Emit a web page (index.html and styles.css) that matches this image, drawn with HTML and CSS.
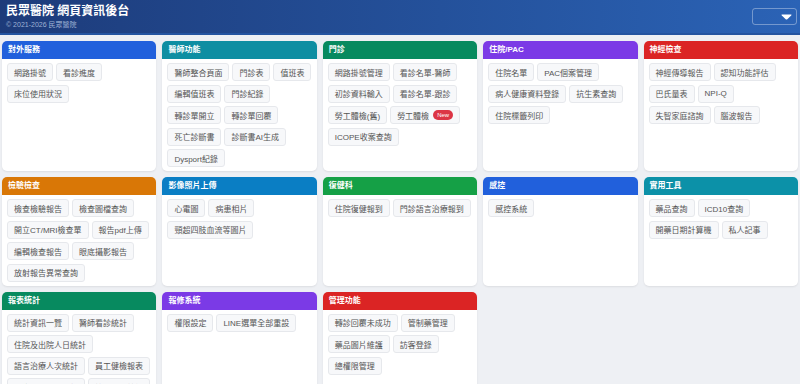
FILE: index.html
```html
<!DOCTYPE html>
<html>
  <head>
    <meta charset="utf-8">
    <title>民眾醫院 網頁資訊後台</title>
    <link rel="stylesheet" href="styles.css">
  </head>
  <body>
    <div class="topbar">
      <div class="brand">
        <h1>民眾醫院 網頁資訊後台</h1>
        <div class="copy">© 2021-2026 民眾醫院</div>
      </div>
      <div class="user-menu">
        <svg width="11" height="6" viewBox="0 0 11 6"><path d="M1 0.5 H10 Q11 0.5 10.2 1.6 L6.3 5.2 Q5.5 5.8 4.7 5.2 L0.8 1.6 Q0 0.5 1 0.5 Z" fill="#fff"/></svg>
      </div>
    </div>

    <div class="grid">
      <div class="card">
        <div class="card-head c-blue">對外服務</div>
        <div class="card-body">
          <a class="btn">網路掛號</a>
          <a class="btn">看診進度</a>
          <a class="btn">床位使用狀況</a>
        </div>
      </div>

      <div class="card">
        <div class="card-head c-teal">醫師功能</div>
        <div class="card-body">
          <a class="btn">醫師整合頁面</a>
          <a class="btn">門診表</a>
          <a class="btn">值班表</a>
          <a class="btn">編輯值班表</a>
          <a class="btn">門診紀錄</a>
          <a class="btn">轉診單開立</a>
          <a class="btn">轉診單回覆</a>
          <a class="btn">死亡診斷書</a>
          <a class="btn">診斷書AI生成</a>
          <a class="btn">Dysport紀錄</a>
        </div>
      </div>

      <div class="card">
        <div class="card-head c-emerald">門診</div>
        <div class="card-body">
          <a class="btn">網路掛號管理</a>
          <a class="btn">看診名單-醫師</a>
          <a class="btn">初診資料輸入</a>
          <a class="btn">看診名單-跟診</a>
          <a class="btn">勞工體檢(舊)</a>
          <a class="btn">勞工體檢 <span class="badge">New</span></a>
          <a class="btn">ICOPE收案查詢</a>
        </div>
      </div>

      <div class="card">
        <div class="card-head c-purple">住院/PAC</div>
        <div class="card-body">
          <a class="btn">住院名單</a>
          <a class="btn">PAC個案管理</a>
          <a class="btn">病人健康資料登錄</a>
          <a class="btn">抗生素查詢</a>
          <a class="btn">住院標籤列印</a>
        </div>
      </div>

      <div class="card">
        <div class="card-head c-red">神經檢查</div>
        <div class="card-body">
          <a class="btn">神經傳導報告</a>
          <a class="btn">認知功能評估</a>
          <a class="btn">巴氏量表</a>
          <a class="btn">NPI-Q</a>
          <a class="btn">失智家庭諮詢</a>
          <a class="btn">腦波報告</a>
        </div>
      </div>

      <div class="card">
        <div class="card-head c-orange">檢驗檢查</div>
        <div class="card-body">
          <a class="btn">檢查檢驗報告</a>
          <a class="btn">檢查圖檔查詢</a>
          <a class="btn">開立CT/MRI檢查單</a>
          <a class="btn">報告pdf上傳</a>
          <a class="btn">編輯檢查報告</a>
          <a class="btn">眼底攝影報告</a>
          <a class="btn">放射報告異常查詢</a>
        </div>
      </div>

      <div class="card">
        <div class="card-head c-sky">影像照片上傳</div>
        <div class="card-body">
          <a class="btn">心電圖</a>
          <a class="btn">病患相片</a>
          <a class="btn">頸超四肢血流等圖片</a>
        </div>
      </div>

      <div class="card">
        <div class="card-head c-green">復健科</div>
        <div class="card-body">
          <a class="btn">住院復健報到</a>
          <a class="btn">門診語言治療報到</a>
        </div>
      </div>

      <div class="card">
        <div class="card-head c-blue">感控</div>
        <div class="card-body">
          <a class="btn">感控系統</a>
        </div>
      </div>

      <div class="card">
        <div class="card-head c-cyan">實用工具</div>
        <div class="card-body">
          <a class="btn">藥品查詢</a>
          <a class="btn">ICD10查詢</a>
          <a class="btn">開藥日期計算機</a>
          <a class="btn">私人記事</a>
        </div>
      </div>

      <div class="card">
        <div class="card-head c-emerald">報表統計</div>
        <div class="card-body">
          <a class="btn">統計資訊一覽</a>
          <a class="btn">醫師看診統計</a>
          <a class="btn">住院及出院人日統計</a>
          <a class="btn">語言治療人次統計</a>
          <a class="btn">員工健檢報表</a>
          <a class="btn">病床異動資料更新</a>
          <a class="btn">簽署追蹤統計</a>
        </div>
      </div>

      <div class="card">
        <div class="card-head c-purple">報修系統</div>
        <div class="card-body">
          <a class="btn">權限設定</a>
          <a class="btn">LINE選單全部重設</a>
        </div>
      </div>

      <div class="card">
        <div class="card-head c-red">管理功能</div>
        <div class="card-body">
          <a class="btn">轉診回覆未成功</a>
          <a class="btn">管制藥管理</a>
          <a class="btn">藥品圖片維護</a>
          <a class="btn">訪客登錄</a>
          <a class="btn">總權限管理</a>
        </div>
      </div>
    </div>
  </body>
</html>
```

FILE: styles.css
```css
body {
  margin: 0;
  font-family: "Liberation Sans", "Noto Sans CJK TC", sans-serif;
  background-color: #eef0f4;
  color: #555;
}
.topbar {
  height: 33px;
  display: flex;
  justify-content: space-between;
  align-items: center;
  padding: 0 3px 0 6px;
  background: linear-gradient(90deg, #1d3b7a 0%, #24519b 55%, #2b63b6 100%);
  border-bottom: 2px solid #2454a0;
}
.brand h1 {
  margin: 0;
  font-size: 12px;
  line-height: 14px;
  color: #fff;
  font-weight: bold;
}
.copy {
  font-size: 7px;
  line-height: 9px;
  margin-top: 2px;
  color: #9fb2d4;
}
.user-menu {
  width: 45px;
  height: 17px;
  box-sizing: border-box;
  border: 1px solid rgba(255, 255, 255, 0.35);
  border-radius: 3px;
  display: flex;
  justify-content: flex-end;
  align-items: center;
  padding-right: 4px;
}
.grid {
  display: grid;
  grid-template-columns: repeat(5, 1fr);
  gap: 6px;
  padding: 6px 2px;
}
.card {
  background-color: #fff;
  border-radius: 5px;
  box-shadow: 0 1px 2px rgba(0, 0, 0, 0.08);
  overflow: hidden;
}
.card-head {
  height: 18px;
  line-height: 18px;
  padding: 0 6px;
  font-size: 8px;
  font-weight: bold;
  color: #fff;
}
.card-body {
  display: flex;
  flex-wrap: wrap;
  align-content: flex-start;
  gap: 3.5px 3px;
  padding: 4px 5px;
}
.btn {
  display: inline-flex;
  align-items: center;
  height: 18px;
  box-sizing: border-box;
  padding: 0 6px;
  font-size: 8px;
  color: #555;
  background-color: #f7f8fa;
  border: 1px solid #e6e8ec;
  border-radius: 3px;
  white-space: nowrap;
}
.badge {
  display: inline-block;
  margin-left: 4px;
  padding: 0 4px;
  height: 10px;
  line-height: 10px;
  font-size: 6px;
  color: #fff;
  background-color: #dc3545;
  border-radius: 5px;
}
.c-blue { background-color: #2160dc; }
.c-teal { background-color: #0e8ea2; }
.c-emerald { background-color: #078a5f; }
.c-purple { background-color: #7b3ae6; }
.c-red { background-color: #db2424; }
.c-orange { background-color: #d97706; }
.c-sky { background-color: #0a7ec4; }
.c-green { background-color: #15a046; }
.c-cyan { background-color: #0c91a8; }
```
